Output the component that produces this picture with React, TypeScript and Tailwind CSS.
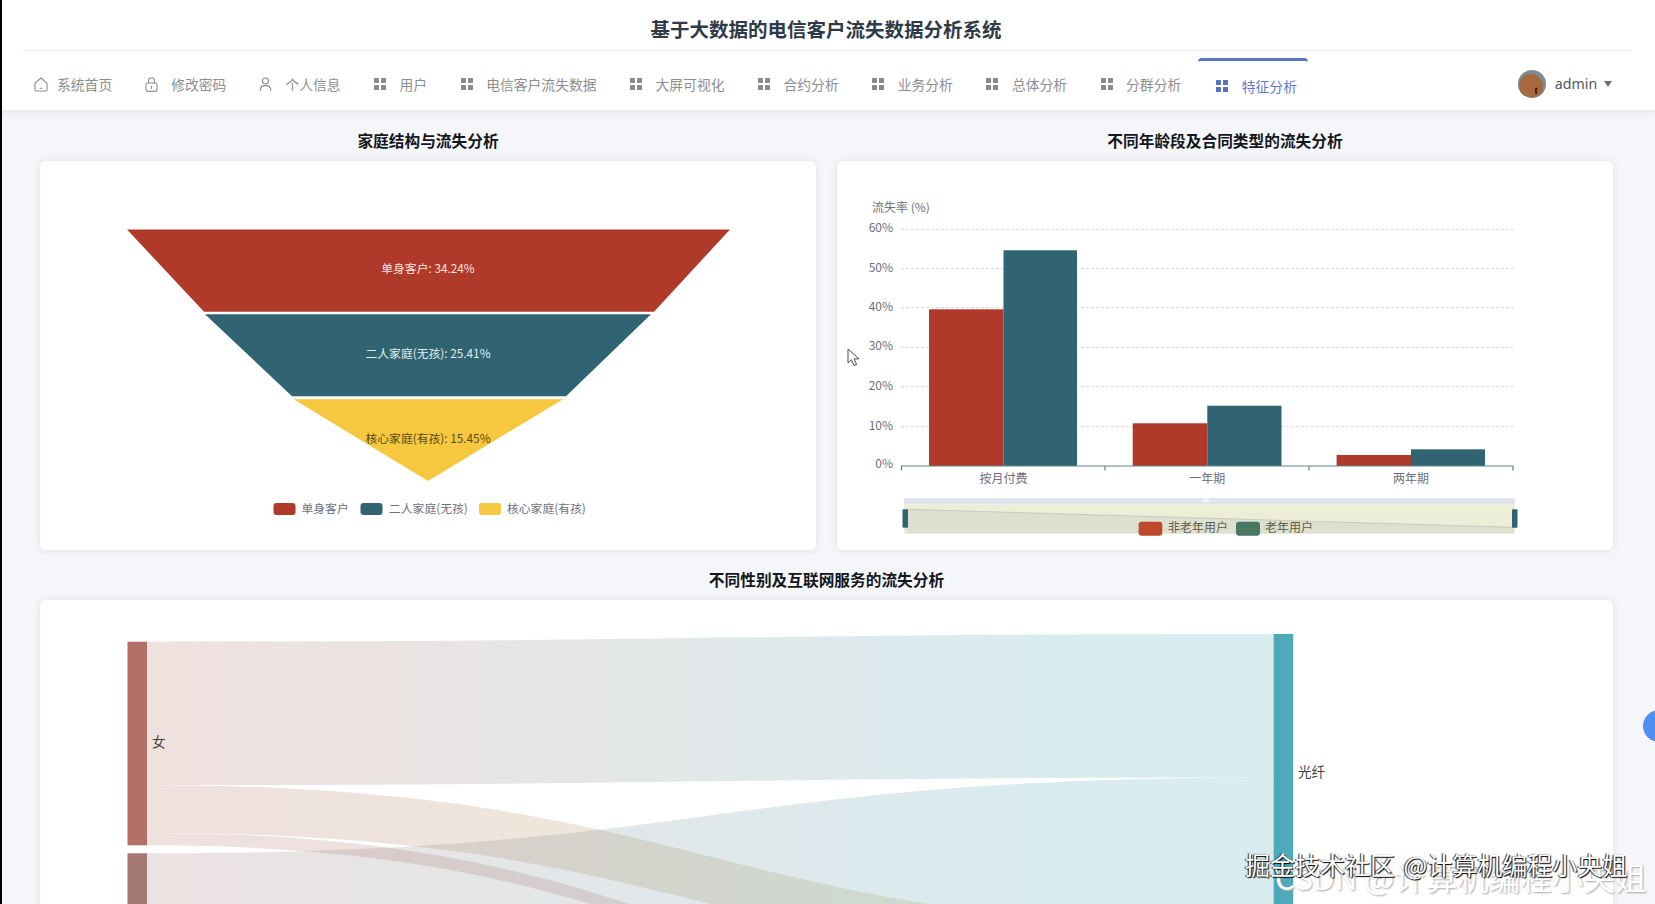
const cjk = "font-['Noto_Sans_CJK_SC','Noto_Sans',sans-serif]";

const RED = "#b03a2a";
const TEAL = "#306472";
const YELLOW = "#f5c83f";

function HomeIcon() {
  return (
    <svg width="14" height="15" viewBox="0 0 14 15" fill="none" stroke="#8c8c8c" strokeWidth="1.1" strokeLinejoin="round" strokeLinecap="round">
      <path d="M1 6.2 7 1l6 5.2v6.6a1.2 1.2 0 0 1-1.2 1.2H2.2A1.2 1.2 0 0 1 1 12.8z" />
      <path d="M6 11.2h2" />
    </svg>
  );
}

function LockIcon() {
  return (
    <svg width="13" height="15" viewBox="0 0 13 15" fill="none" stroke="#8c8c8c" strokeWidth="1.1" strokeLinecap="round">
      <rect x="1" y="6" width="11" height="8.4" rx="1.6" />
      <path d="M3.6 6V3.6a2.9 2.9 0 0 1 5.8 0V6" />
      <path d="M6.5 9.2v2.2" />
    </svg>
  );
}

function UserIcon() {
  return (
    <svg width="13" height="14" viewBox="0 0 13 14" fill="none" stroke="#8c8c8c" strokeWidth="1.1" strokeLinecap="round">
      <circle cx="6.5" cy="4" r="3" />
      <path d="M1.2 13.4c0-3 2.3-4.8 5.3-4.8s5.3 1.8 5.3 4.8" />
    </svg>
  );
}

function GridIcon({ color = "#8a8a8a", className }: { color?: string; className?: string }) {
  return (
    <svg width="12" height="12" viewBox="0 0 12 12" fill={color} className={className}>
      <rect x="0" y="0" width="5" height="5" rx="0.5" />
      <rect x="7" y="0" width="5" height="5" rx="0.5" />
      <rect x="0" y="7" width="5" height="5" rx="0.5" />
      <rect x="7" y="7" width="5" height="5" rx="0.5" />
    </svg>
  );
}

function Avatar() {
  return (
    <svg width="28" height="28" viewBox="0 0 28 28" className="shrink-0">
      <circle cx="14" cy="14" r="14" fill="#7b8b94" />
      <path d="M1 17C1 9 6 4 12 4c7 0 12 5 13 11 .6 4-1 8-4 10-3 2.500-8 3-11 2-5-1.500-9-5-9-10z" fill="#a8683e" />
      <path d="M17 18.500l2-1 .5 1.500-.8 1 .3 4-1.600.3-.2-3.500z" fill="#2a1a14" />
    </svg>
  );
}

const navItems = [
  { label: "个人信息", icon: <UserIcon /> },
  { label: "用户", icon: <GridIcon className="ml-px" /> },
  { label: "电信客户流失数据", icon: <GridIcon className="ml-px" /> },
  { label: "大屏可视化", icon: <GridIcon className="ml-px" /> },
  { label: "合约分析", icon: <GridIcon className="ml-px" /> },
  { label: "业务分析", icon: <GridIcon className="ml-px" /> },
  { label: "总体分析", icon: <GridIcon className="ml-px" /> },
  { label: "分群分析", icon: <GridIcon className="ml-px" /> },
];

function NavItem({ label, icon }: { label: string; icon: React.ReactNode }) {
  return (
    <div className="flex items-center pl-4 pr-[16.5px] pt-[7px] text-[13.8px] text-[#8e8e8e]">
      <span className="flex w-[26.5px] shrink-0">{icon}</span>
      <span>{label}</span>
    </div>
  );
}

function Header() {
  return (
    <header className="relative z-10 h-[110px] bg-white shadow-[0_2px_8px_rgba(0,0,0,0.07)]">
      <div className="ml-[17px] mr-[22px] flex h-[51px] items-center justify-center border-b border-[#f0f1f2] pt-[8px]">
        <h1 className="text-[19.5px] font-bold text-[#2f3a48]">基于大数据的电信客户流失数据分析系统</h1>
      </div>
      <nav className="flex h-[59px] pl-4">
        <div className="flex items-center pl-4 pr-[16.5px] pt-[7px] text-[13.8px] text-[#8e8e8e]">
          <span className="flex w-[23px] shrink-0">
            <HomeIcon />
          </span>
          <span>系统首页</span>
        </div>
        <NavItem label="修改密码" icon={<LockIcon />} />
        {navItems.map((item) => (
          <NavItem key={item.label} label={item.label} icon={item.icon} />
        ))}
        <div className="mt-[7px] flex h-[52px] w-[110px] items-center rounded-t-[4px] border-t-[3px] border-[#5b72c4] pl-[18px] pt-[1px] text-[13.8px] text-[#6478c8]">
          <span className="flex w-[26px] shrink-0">
            <GridIcon color="#5b72c4" />
          </span>
          <span>特征分析</span>
        </div>
        <div className="ml-[210px] flex items-center pt-[7px]">
          <Avatar />
          <span className="ml-[9px] font-['Noto_Sans',sans-serif] text-[14.2px] text-[#55585e]">admin</span>
          <svg width="8" height="6" viewBox="0 0 8 6" fill="#6b6e73" className="ml-[7px]">
            <path d="M0 0h8L4 6z" />
          </svg>
        </div>
      </nav>
    </header>
  );
}

function SectionTitle({ children }: { children: React.ReactNode }) {
  return <h2 className="mb-[9px] h-[22px] text-center text-[15.7px] font-bold leading-[22px] text-[#14171c]">{children}</h2>;
}

function FunnelChart() {
  const legend = [
    { x: 273.500, tx: 301.500, color: RED, label: "单身客户" },
    { x: 360.500, tx: 389, color: TEAL, label: "二人家庭(无孩)" },
    { x: 479, tx: 507, color: YELLOW, label: "核心家庭(有孩)" },
  ];
  return (
    <svg viewBox="40 161 776 389" className="block h-full w-full">
      <polygon points="127,229.500 730,229.500 654,311.700 204,311.700" fill={RED} />
      <polygon points="205,314.300 651,314.300 566,396.300 292,396.300" fill={TEAL} />
      <polygon points="293.600,399.300 563,399.300 428,481" fill={YELLOW} />
      <text x="428" y="267.500" textAnchor="middle" dominantBaseline="central" className="fill-[#f6e6df] text-[11.8px]">单身客户: 34.24%</text>
      <text x="428" y="352.500" textAnchor="middle" dominantBaseline="central" className="fill-[#e4eef0] text-[11.8px]">二人家庭(无孩): 25.41%</text>
      <text x="428" y="437.500" textAnchor="middle" dominantBaseline="central" className="fill-[#5b4a12] text-[11.8px]">核心家庭(有孩): 15.45%</text>
      {legend.map((l) => (
        <g key={l.label}>
          <rect x={l.x} y="503" width="22" height="12" rx="3" fill={l.color} />
          <text x={l.tx} y="507" dominantBaseline="central" className="fill-[#6e7079] text-[11.8px]">{l.label}</text>
        </g>
      ))}
    </svg>
  );
}

function BarChart() {
  const gridY = [
    { y: 229.300, label: "60%" },
    { y: 268.700, label: "50%" },
    { y: 307.700, label: "40%" },
    { y: 347.300, label: "30%" },
    { y: 386.700, label: "20%" },
    { y: 426.700, label: "10%" },
  ];
  const bars = [
    { x: 929, mid: 1003.500, end: 1077, a: 309.300, b: 250.300, label: "按月付费" },
    { x: 1132.700, mid: 1207.300, end: 1281.500, a: 423.300, b: 405.700, label: "一年期" },
    { x: 1336.600, mid: 1411, end: 1485, a: 455, b: 449.300, label: "两年期" },
  ];
  const base = 466;
  return (
    <svg viewBox="837 161 776 389" className="block h-full w-full">
      <text x="872" y="206.500" dominantBaseline="central" className="fill-[#6e7079] text-[12px]">流失率 (%)</text>
      {gridY.map((g) => (
        <g key={g.label}>
          <line x1="901" x2="1513.500" y1={g.y} y2={g.y} stroke="#d4d6da" strokeDasharray="3 2" />
          <text x="893" y={g.y - 2.500} textAnchor="end" dominantBaseline="central" className="fill-[#6e7079] text-[12px]">{g.label}</text>
        </g>
      ))}
      <text x="893" y={base - 3.500} textAnchor="end" dominantBaseline="central" className="fill-[#6e7079] text-[12px]">0%</text>
      {bars.map((b) => (
        <g key={b.label}>
          <rect x={b.x} y={b.a} width={b.mid - b.x} height={base - b.a} fill={RED} />
          <rect x={b.mid} y={b.b} width={b.end - b.mid} height={base - b.b} fill={TEAL} />
          <text x={b.mid} y="477" textAnchor="middle" dominantBaseline="central" className="fill-[#6e7079] text-[12px]">{b.label}</text>
        </g>
      ))}
      <path d="M901.500 470.500V466H1513V470.500M1105 466V470.500M1309 466V470.500" fill="none" stroke="#5f848c" strokeWidth="1.2" />

      {/* data zoom */}
      <rect x="904" y="498" width="611" height="6.500" fill="#e1e4ee" />
      <rect x="904" y="504.500" width="611" height="29" fill="#eceed8" />
      <polygon points="906,509.300 1514,527.300 1514,533.500 906,533.500" fill="#dce0cf" />
      <line x1="906" y1="509.300" x2="1514" y2="527.300" stroke="#c6cbc0" />
      <rect x="1203" y="499" width="6" height="3" fill="#f5f6fa" />
      <rect x="902.500" y="509.300" width="5.500" height="18.500" rx="1" fill={TEAL} />
      <rect x="1512" y="509.300" width="5.500" height="18.500" rx="1" fill={TEAL} />

      <rect x="1138.600" y="521.700" width="23.700" height="14" rx="3" fill="#bd4a2c" />
      <text x="1168" y="526" dominantBaseline="central" className="fill-[#5e5a48] text-[12px]">非老年用户</text>
      <rect x="1236" y="521.700" width="24" height="14" rx="3" fill="#4a7763" />
      <text x="1265" y="526" dominantBaseline="central" className="fill-[#5e5a48] text-[12px]">老年用户</text>
    </svg>
  );
}

function SankeyChart() {
  return (
    <svg viewBox="40 600 1573 480" className="block h-full w-full">
      <defs>
        <linearGradient id="flowA" gradientUnits="userSpaceOnUse" x1="147" x2="1274" y1="0" y2="0">
          <stop offset="0.03" stopColor="#b0695a" />
          <stop offset="0.8" stopColor="#40a0b2" />
        </linearGradient>
        <linearGradient id="flowB" gradientUnits="userSpaceOnUse" x1="147" x2="1274" y1="0" y2="0">
          <stop offset="0.03" stopColor="#b0695a" />
          <stop offset="0.7" stopColor="#a89a40" />
        </linearGradient>
        <linearGradient id="flowC" gradientUnits="userSpaceOnUse" x1="147" x2="1274" y1="0" y2="0">
          <stop offset="0" stopColor="#b0695a" />
          <stop offset="1" stopColor="#8a4f5c" />
        </linearGradient>
        <linearGradient id="flowD" gradientUnits="userSpaceOnUse" x1="147" x2="1274" y1="0" y2="0">
          <stop offset="0.03" stopColor="#9c6f70" />
          <stop offset="0.8" stopColor="#40a0b2" />
        </linearGradient>
      </defs>
      <path d="M147 641.700C710 641.700 710 634 1274 634V777.500C710 777.500 710 785.200 147 785.200Z" fill="url(#flowA)" fillOpacity="0.2" />
      <path d="M147 785.200C710 785.200 710 928 1274 928V975C710 975 710 833 147 833Z" fill="url(#flowB)" fillOpacity="0.2" />
      <path d="M147 833C710 833 710 1030 1274 1030V1042C710 1042 710 845.300 147 845.300Z" fill="url(#flowC)" fillOpacity="0.2" />
      <path d="M147 853.300C710 853.300 710 777.500 1274 777.500V921C710 921 710 996 147 996Z" fill="url(#flowD)" fillOpacity="0.2" />
      <rect x="127.500" y="641.700" width="19.500" height="203.600" fill="#b37066" />
      <rect x="127.500" y="853.300" width="19.500" height="143" fill="#a67873" />
      <rect x="1273.700" y="634" width="19.500" height="400" fill="#4eaab9" />
      <text x="152" y="741" dominantBaseline="central" className="fill-[#3f3f3f] text-[13.5px]">女</text>
      <text x="1298" y="771" dominantBaseline="central" className="fill-[#3f3f3f] text-[13.5px]">光纤</text>
    </svg>
  );
}

function Card({ className, children }: { className: string; children: React.ReactNode }) {
  return <div className={`rounded-[6px] bg-white shadow-[0_0_8px_rgba(0,0,0,0.09)] ${className}`}>{children}</div>;
}

export default function App() {
  return (
    <div className={`relative h-[904px] overflow-hidden border-l-2 border-black bg-[#f4f6f9] ${cjk}`}>
      <Header />

      <main className="pl-[38px] pr-[42px] pt-5">
        <div className="grid grid-cols-2 gap-x-[21px]">
          <section>
            <SectionTitle>家庭结构与流失分析</SectionTitle>
            <Card className="h-[389px]">
              <FunnelChart />
            </Card>
          </section>
          <section>
            <SectionTitle>不同年龄段及合同类型的流失分析</SectionTitle>
            <Card className="h-[389px]">
              <BarChart />
            </Card>
          </section>
        </div>

        <section className="mt-[19px]">
          <SectionTitle>不同性别及互联网服务的流失分析</SectionTitle>
          <Card className="h-[480px]">
            <SankeyChart />
          </Card>
        </section>
      </main>

      {/* things lying over the page: cursor, side button, watermarks */}
      <svg width="14" height="19" viewBox="0 0 14 19" className="absolute left-[845px] top-[348px]" fill="#ffffff" stroke="#4a4a4a" strokeWidth="1">
        <path d="M1 1v14l3.500-3.200 2.500 5.700 2.600-1.100-2.500-5.500H12z" />
      </svg>
      <div className="absolute right-[-20px] top-[710px] h-8 w-8 rounded-full bg-[#5090f5]" />
      <div className="absolute left-[1273px] top-[858px] whitespace-nowrap text-[31.5px] leading-9 text-[#ffffff] [text-shadow:1px_1px_2px_#a8a8a8]">
        CSDN @计算机编程小央姐
      </div>
      <div className="absolute left-[1243px] top-[846px] whitespace-nowrap text-[25px] leading-9 text-[#ffffff] [word-spacing:3px] [text-shadow:1px_1px_1px_#000,-1px_0_1px_#222]">
        掘金技术社区 @计算机编程小央姐
      </div>
    </div>
  );
}
